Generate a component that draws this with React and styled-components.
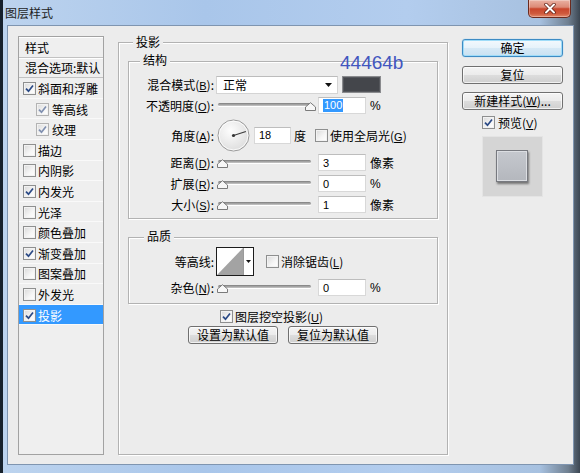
import React from 'react';
import styled, { createGlobalStyle } from 'styled-components';

const GlobalStyle = createGlobalStyle`
  * { box-sizing: border-box; }
  html, body { margin: 0; padding: 0; }
  body {
    background: #ececec;
    font-family: "Noto Sans CJK SC", "Noto Sans", sans-serif;
    font-size: 12px;
    color: #000;
  }
`;

const layers = [
  { name: '样式', head: true },
  { name: '混合选项:默认', head: true },
  { name: '斜面和浮雕', on: true },
  { name: '等高线', on: true, sub: true },
  { name: '纹理', on: true, sub: true },
  { name: '描边' },
  { name: '内阴影' },
  { name: '内发光', on: true },
  { name: '光泽' },
  { name: '颜色叠加' },
  { name: '渐变叠加', on: true },
  { name: '图案叠加' },
  { name: '外发光' },
  { name: '投影', on: true, active: true },
];

// Window chrome
const Window = styled.div`
  width: 580px;
  height: 473px;
  display: flex;
  flex-direction: column;
  border-left: 3px solid #17212c;
  background: linear-gradient(to right, #bcd3ee 0%, #a9c6ea 35%, #b3cdee 70%, #a7c1e0 93%, #6f7f90 98%, #3b4652 100%);
  overflow: hidden;
`;

const TitleBar = styled.div`
  height: 25px;
  flex-shrink: 0;
  display: flex;
  justify-content: space-between;
  align-items: flex-start;
  padding-left: 2px;
`;

const Title = styled.span`
  margin-top: 5px;
  line-height: 16px;
  color: #1e1e1e;
`;

const CloseButton = styled.div`
  width: 43px;
  height: 18px;
  margin-right: 9px;
  border: 1px solid #6b2a1e;
  border-top: none;
  border-radius: 0 0 5px 5px;
  background: linear-gradient(to bottom, #eab1a3 0%, #dc8a77 42%, #c9452c 52%, #cf5a3d 80%, #e3896a 100%);
  box-shadow: inset 0 0 0 1px rgba(255, 255, 255, 0.3);
  display: flex;
  align-items: center;
  justify-content: center;
`;

const Frame = styled.div`
  flex: 1;
  display: flex;
  padding: 0 6px 8px 4px;
`;

const Client = styled.div`
  flex: 1;
  display: flex;
  align-items: flex-start;
  padding: 10px 0 0 10px;
  background: #ececec;
  border: 1px solid #7f95b0;
`;

// Left list
const LayerList = styled.div`
  width: 86px;
  height: 419px;
  flex-shrink: 0;
  border: 1px solid #a2a2a2;
  background: #efefef;
`;

const LayerItem = styled.div`
  height: 20.6px;
  display: flex;
  align-items: center;
  gap: ${p => (p.$sub ? 3 : 2)}px;
  padding-left: ${p => (p.$head ? 6 : p.$sub ? 17 : 4)}px;
  white-space: nowrap;
  background: ${p => (p.$active ? '#3399ff' : 'transparent')};
  color: ${p => (p.$active ? '#fff' : '#000')};
  box-shadow: ${p => (p.$head ? 'inset 0 -1px 0 #c2c2c2, inset 0 1px 0 #fff' : 'inset 0 -1px 0 #f9f9f9')};
`;

// Checkbox
const CheckBox = styled.span`
  width: 13px;
  height: 13px;
  flex-shrink: 0;
  border: 1px solid ${p => (p.$dim ? '#b3b3b3' : '#8e8f8f')};
  background: linear-gradient(135deg, #d9d9d9 0%, #f6f6f6 60%, #ffffff 100%);
  box-shadow: inset 0 0 0 1px #f2f2f2;
  display: flex;
  align-items: center;
  justify-content: center;
`;

const Check = ({ on, dim }) => (
  <CheckBox $dim={dim}>
    {on && (
      <svg width="9" height="9" viewBox="0 0 9 9">
        <path d="M1 4.6 L3.5 7.2 L8 1.4" fill="none" stroke={dim ? '#8090b0' : '#2b4a86'} strokeWidth="1.7" />
      </svg>
    )}
  </CheckBox>
);

// Group boxes
const Group = styled.div`
  position: relative;
  flex-shrink: 0;
  height: ${p => p.$h}px;
  margin-top: ${p => p.$mt || 0}px;
  padding: ${p => p.$pad || '0'};
  border: 1px solid #b2b2b2;
  box-shadow: inset 1px 1px 0 #fff, 1px 1px 0 #fff;
`;

const MainGroup = styled(Group)`
  width: 330px;
  margin-left: 14px;
`;

const Legend = styled.span`
  position: absolute;
  top: ${p => p.$top}px;
  left: ${p => p.$left}px;
  padding: 0 3px;
  line-height: 16px;
  background: #ececec;
`;

const ColorNote = styled.span`
  position: absolute;
  top: -9px;
  left: 211px;
  font-family: "Liberation Sans", Arial, sans-serif;
  font-size: 19px;
  line-height: 19px;
  color: #4256bf;
`;

const Row = styled.div`
  display: flex;
  align-items: center;
  height: ${p => p.$h || 21}px;
  margin-top: ${p => p.$mt || 0}px;
  white-space: nowrap;
`;

const Label = styled.span`
  width: 85px;
  flex-shrink: 0;
  text-align: right;
  u { font-family: "Liberation Sans", Arial, sans-serif; font-size: 11px; }
`;

const Select = styled.div`
  width: 122px;
  height: 18px;
  margin-left: 2px;
  padding: 0 5px 0 6px;
  display: flex;
  align-items: center;
  justify-content: space-between;
  background: #fff;
  border: 1px solid #d4d4d4;
  border-top-color: #bcbcbc;
`;

const Swatch = styled.div`
  width: 39px;
  height: 17px;
  margin-left: 4px;
  background: #44464b;
  border: 1px solid #8a8b8e;
  box-shadow: inset 0 0 0 1px #55575c;
`;

const SliderWrap = styled.div`
  position: relative;
  width: 100px;
  height: 10px;
  margin-left: 3px;
`;

const Track = styled.div`
  position: absolute;
  top: 2px;
  left: 1px;
  width: 93px;
  height: 3px;
  border-radius: 2px;
  background: linear-gradient(#7d7d7d, #c9c9c9);
  box-shadow: 0 1px 0 #fff;
`;

const Thumb = styled.svg`
  position: absolute;
  top: 1px;
  width: 11px;
  height: 9px;
`;

const Slider = ({ value }) => (
  <SliderWrap>
    <Track />
    <Thumb viewBox="0 0 11 9" style={{ left: `${value * 0.88}px` }}>
      <path d="M0.5 8.5 L0.5 5 L5.5 0.7 L10.5 5 L10.5 8.5 Z" fill="#f7f7f7" stroke="#7a7a7a" />
    </Thumb>
  </SliderWrap>
);

const Field = styled.div`
  width: ${p => p.$w || 48}px;
  height: 17px;
  margin-left: ${p => (p.$ml !== undefined ? p.$ml : 1)}px;
  padding-left: 4px;
  display: flex;
  align-items: center;
  background: #fff;
  border: 1px solid #d8d8d8;
  border-top-color: #bdbdbd;
  font-family: "Liberation Sans", Arial, sans-serif;
  font-size: 11px;
`;

const Selected = styled.span`
  background: #3399ff;
  color: #fff;
  line-height: 13px;
  padding: 0 1px;
`;

const Unit = styled.span`
  margin-left: ${p => p.$ml || 4}px;
  font-family: ${p => (p.$latin ? '"Liberation Sans", Arial, sans-serif' : 'inherit')};
`;

const CheckLabel = styled.span`
  display: flex;
  align-items: center;
  gap: 2px;
  margin-left: ${p => p.$ml || 0}px;
  u { font-family: "Liberation Sans", Arial, sans-serif; font-size: 11px; }
`;

const DialSvg = styled.svg`
  margin-left: 3px;
  flex-shrink: 0;
`;

const Dial = () => (
  <DialSvg width="33" height="33" viewBox="0 0 33 33">
    <defs>
      <radialGradient id="dialFill" cx="40%" cy="35%" r="70%">
        <stop offset="0" stopColor="#fdfdfd" />
        <stop offset="1" stopColor="#dcdcdc" />
      </radialGradient>
    </defs>
    <circle cx="16.5" cy="16.5" r="15.5" fill="url(#dialFill)" stroke="#9a9a9a" />
    <circle cx="16.5" cy="16.5" r="14.4" fill="none" stroke="#fff" strokeOpacity="0.8" />
    <line x1="16.5" y1="16.5" x2="28.9" y2="12.5" stroke="#3a3a3a" strokeWidth="1.2" />
    <circle cx="16.5" cy="16.5" r="1.6" fill="#333" />
  </DialSvg>
);

const ContourBox = styled.div`
  width: 38px;
  height: 29px;
  margin-left: 2px;
  display: flex;
  background: #fff;
  border: 1px solid #1c1c1c;
`;

const ContourPreview = styled.svg`
  width: 26px;
  height: 27px;
  display: block;
`;

const ContourArrow = styled.div`
  flex: 1;
  display: flex;
  align-items: center;
  justify-content: center;
  border-left: 1px solid #9a9a9a;
`;

const KnockoutRow = styled(Row)`
  height: 16px;
  margin-top: 4px;
  padding-left: 92px;
`;

const ButtonRow = styled.div`
  display: flex;
  justify-content: center;
  gap: 10px;
  margin-top: 2px;
`;

const Button = styled.button`
  width: ${p => p.$w || 101}px;
  height: 18px;
  padding: 0;
  display: flex;
  align-items: center;
  justify-content: center;
  font: inherit;
  line-height: 14px;
  color: #000;
  white-space: nowrap;
  border: 1px solid ${p => (p.$primary ? '#3d8bc4' : '#707070')};
  border-radius: 3px;
  background: ${p =>
    p.$primary
      ? 'linear-gradient(#f3f9fd 0%, #e6f2fa 50%, #d6e9f6 50%, #c9e1f2 100%)'
      : 'linear-gradient(#f4f4f4 0%, #ebebeb 50%, #dddddd 50%, #cfcfcf 100%)'};
  box-shadow: ${p => (p.$primary ? 'inset 0 0 0 1px #9fdcf8, 0 0 1px #58bbef' : 'inset 0 0 0 1px rgba(255,255,255,0.7)')};
  u { font-family: "Liberation Sans", Arial, sans-serif; font-size: 11px; }
`;

// Right column
const SideColumn = styled.div`
  width: 101px;
  margin-left: 14px;
  margin-top: 3px;
  display: flex;
  flex-direction: column;
`;

const SideButton = styled(Button)`
  margin-top: ${p => p.$mt || 0}px;
`;

const PreviewCheck = styled(CheckLabel)`
  height: 14px;
  margin-top: 5px;
  padding-left: 20px;
  gap: 3px;
`;

const PreviewBox = styled.div`
  width: 61px;
  height: 61px;
  margin: 7px 0 0 20px;
  display: flex;
  align-items: center;
  justify-content: center;
  background: #d5d5d5;
  border: 1px solid #e4e4e4;
`;

const PreviewSwatch = styled.div`
  width: 32px;
  height: 32px;
  margin: -1px 2px 0 0;
  background: linear-gradient(#c5c8ce, #b4b7bd);
  border: 1px solid #77797f;
  box-shadow: 1px 2px 2px rgba(0, 0, 0, 0.45), inset 0 0 0 1px #dcdee2;
`;

const Arrow = () => (
  <svg width="7" height="4" viewBox="0 0 7 4">
    <path d="M0 0 H7 L3.5 4 Z" fill="#111" />
  </svg>
);

const App = () => (
  <>
    <GlobalStyle />
    <Window>
      <TitleBar>
        <Title>图层样式</Title>
        <CloseButton>
          <svg width="12" height="11" viewBox="0 0 12 11">
            <path d="M2 1.5 L10 9.5 M10 1.5 L2 9.5" stroke="#5a1a10" strokeWidth="3.4" strokeLinecap="round" />
            <path d="M2 1.5 L10 9.5 M10 1.5 L2 9.5" stroke="#fff" strokeWidth="2" strokeLinecap="round" />
          </svg>
        </CloseButton>
      </TitleBar>
      <Frame>
        <Client>
          <LayerList>
            {layers.map(l => (
              <LayerItem key={l.name} $head={l.head} $sub={l.sub} $active={l.active}>
                {!l.head && <Check on={l.on} dim={l.sub} />}
                <span>{l.name}</span>
              </LayerItem>
            ))}
          </LayerList>

          <MainGroup $h={413} $mt={6} $pad="18px 9px 0">
            <Legend $top={-9} $left={14}>投影</Legend>

            <Group $h={158} $pad="12px 0 0">
              <Legend $top={-10} $left={11}>结构</Legend>
              <ColorNote>44464b</ColorNote>
              <Row>
                <Label>混合模式(<u>B</u>):</Label>
                <Select>
                  <span>正常</span>
                  <Arrow />
                </Select>
                <Swatch />
              </Row>
              <Row>
                <Label>不透明度(<u>O</u>):</Label>
                <Slider value={100} />
                <Field><Selected>100</Selected></Field>
                <Unit $latin>%</Unit>
              </Row>
              <Row $h={34} $mt={2}>
                <Label>角度(<u>A</u>):</Label>
                <Dial />
                <Field $w={37} $ml={4}>18</Field>
                <Unit $ml={3}>度</Unit>
                <CheckLabel $ml={9}>
                  <Check />
                  <span>使用全局光(<u>G</u>)</span>
                </CheckLabel>
              </Row>
              <Row>
                <Label>距离(<u>D</u>):</Label>
                <Slider value={0} />
                <Field>3</Field>
                <Unit>像素</Unit>
              </Row>
              <Row>
                <Label>扩展(<u>R</u>):</Label>
                <Slider value={0} />
                <Field>0</Field>
                <Unit $latin>%</Unit>
              </Row>
              <Row>
                <Label>大小(<u>S</u>):</Label>
                <Slider value={0} />
                <Field>1</Field>
                <Unit>像素</Unit>
              </Row>
            </Group>

            <Group $h={67} $mt={18} $pad="9px 0 0">
              <Legend $top={-10} $left={15}>品质</Legend>
              <Row $h={29}>
                <Label>等高线:</Label>
                <ContourBox>
                  <ContourPreview viewBox="0 0 26 27">
                    <polygon points="0,27 26,0 26,27" fill="#a3a3a3" />
                  </ContourPreview>
                  <ContourArrow>
                    <svg width="5" height="3" viewBox="0 0 5 3">
                      <path d="M0 0 H5 L2.5 3 Z" fill="#111" />
                    </svg>
                  </ContourArrow>
                </ContourBox>
                <CheckLabel $ml={12}>
                  <Check />
                  <span>消除锯齿(<u>L</u>)</span>
                </CheckLabel>
              </Row>
              <Row $mt={1}>
                <Label>杂色(<u>N</u>):</Label>
                <Slider value={0} />
                <Field>0</Field>
                <Unit $latin>%</Unit>
              </Row>
            </Group>

            <KnockoutRow>
              <CheckLabel>
                <Check on />
                <span>图层挖空投影(<u>U</u>)</span>
              </CheckLabel>
            </KnockoutRow>
            <ButtonRow>
              <Button $w={90}>设置为默认值</Button>
              <Button $w={90}>复位为默认值</Button>
            </ButtonRow>
          </MainGroup>

          <SideColumn>
            <SideButton $primary>确定</SideButton>
            <SideButton $mt={9}>复位</SideButton>
            <SideButton $mt={8}>新建样式(<u>W</u>)...</SideButton>
            <PreviewCheck>
              <Check on />
              <span>预览(<u>V</u>)</span>
            </PreviewCheck>
            <PreviewBox>
              <PreviewSwatch />
            </PreviewBox>
          </SideColumn>
        </Client>
      </Frame>
    </Window>
  </>
);

export default App;
